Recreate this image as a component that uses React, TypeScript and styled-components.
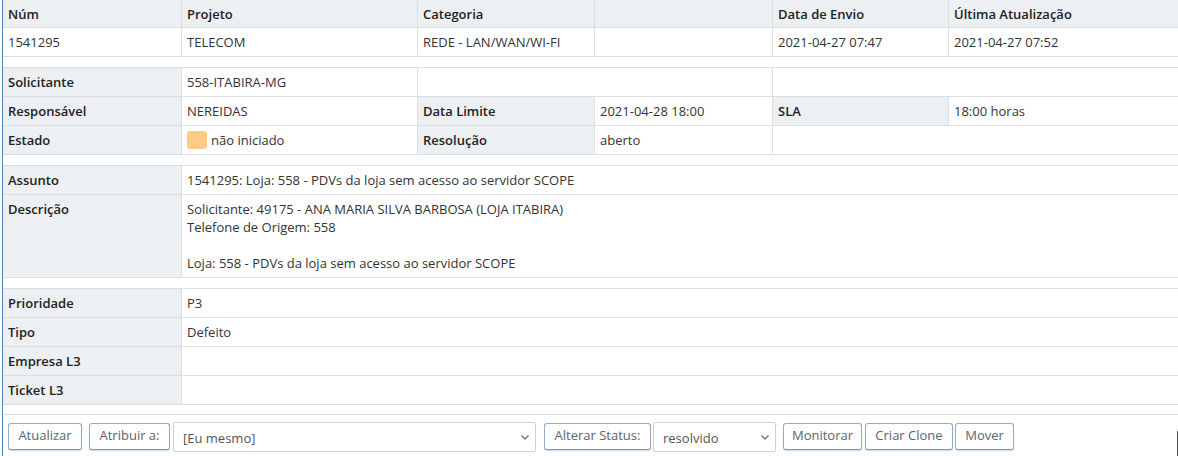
import React from "react";
import styled, { createGlobalStyle } from "styled-components";

const Global = createGlobalStyle`
  html, body { margin: 0; padding: 0; background: #fff; }
  body { font-family: "Open Sans", "Liberation Sans", sans-serif; font-size: 13px; color: #333; }
  * { box-sizing: border-box; }
`;

const Page = styled.div`
  margin-left: 2px;
  width: 1176px;
  height: 456px;
  border-left: 1px solid #4a85c6;
  overflow: hidden;
`;

const Grid = styled.div<{ $cols: string; $gap?: number; $top?: boolean }>`
  display: grid;
  grid-template-columns: ${(p) => p.$cols};
  margin-top: ${(p) => p.$gap ?? 0}px;
  border-top: ${(p) => (p.$top ? "1px solid #dcdfe2" : "none")};
`;

const Cell = styled.div<{ $label?: boolean; $span?: number; $last?: boolean; $h?: number; $top?: boolean }>`
  grid-column: span ${(p) => p.$span ?? 1};
  height: ${(p) => p.$h ?? 29}px;
  padding: ${(p) => (p.$top ? "5px 5px 0" : "0 5px")};
  display: flex;
  align-items: ${(p) => (p.$top ? "flex-start" : "center")};
  line-height: 18px;
  border-bottom: 1px solid #dcdfe2;
  border-right: ${(p) => (p.$last ? "none" : "1px solid #dcdfe2")};
  background: ${(p) => (p.$label ? "#ecf0f3" : "#fff")};
  font-weight: ${(p) => (p.$label ? 600 : 400)};
  color: ${(p) => (p.$label ? "#222" : "#333")};
  white-space: nowrap;
`;

const Lines = styled.div`
  display: flex;
  flex-direction: column;
  white-space: pre;
`;

const StatusDot = styled.span`
  display: inline-block;
  width: 20px;
  height: 18px;
  border-radius: 3px;
  background: #ffca85;
  margin-right: 4px;
`;

const Footer = styled.div`
  margin-top: 9px;
  border-top: 1px solid #dcdfe2;
  padding: 7px 0 0 5px;
  display: flex;
  align-items: flex-start;
  height: 60px;
`;

const Button = styled.button<{ $ml?: number; $w: number }>`
  margin-left: ${(p) => p.$ml ?? 0}px;
  width: ${(p) => p.$w}px;
  height: 27px;
  padding: 0 0 3px;
  margin-top: 1px;
  font-family: "Open Sans", "Liberation Sans", sans-serif;
  font-size: 13px;
  color: #5a6470;
  background: #fff;
  border: 1px solid #93abc6;
  border-bottom-color: #7f98b5;
  border-radius: 3px;
  box-shadow: 0 1px 1px rgba(120, 150, 190, 0.35);
  white-space: nowrap;
`;

const SelectWrap = styled.div<{ $ml?: number; $w: number }>`
  position: relative;
  margin-left: ${(p) => p.$ml ?? 0}px;
  width: ${(p) => p.$w}px;
  height: 30px;
`;

const Select = styled.select`
  appearance: none;
  -webkit-appearance: none;
  width: 100%;
  height: 100%;
  padding: 2px 24px 0 9px;
  font-family: "Open Sans", "Liberation Sans", sans-serif;
  font-size: 13px;
  color: #555;
  background: #fff;
  border: 1px solid #cfd3d7;
  border-radius: 2px;
  outline: none;
`;

const Chevron = styled.svg`
  position: absolute;
  right: 6px;
  top: 12px;
  width: 10px;
  height: 7px;
  pointer-events: none;
`;

const EdgeMark = styled.div`
  margin-left: auto;
  margin-top: 9px;
  width: 1px;
  height: 30px;
  background: #555;
`;

const Arrow = () => (
  <Chevron viewBox="0 0 10 7">
    <path d="M1.5 1.5 L5 5 L8.5 1.5" fill="none" stroke="#777" strokeWidth="1.5" />
  </Chevron>
);

const SIX = "179px 236px 177px 178px 176px 1fr";
const TWO = "179px 1fr";

export default function App() {
  return (
    <>
      <Global />
      <Page>
        <Grid $cols={SIX}>
          <Cell $label $h={28}>Núm</Cell>
          <Cell $label $h={28}>Projeto</Cell>
          <Cell $label $h={28}>Categoria</Cell>
          <Cell $label $h={28}></Cell>
          <Cell $label $h={28}>Data de Envio</Cell>
          <Cell $label $h={28} $last>Última Atualização</Cell>
          <Cell>1541295</Cell>
          <Cell>TELECOM</Cell>
          <Cell>REDE - LAN/WAN/WI-FI</Cell>
          <Cell></Cell>
          <Cell>2021-04-27 07:47</Cell>
          <Cell $last>2021-04-27 07:52</Cell>
        </Grid>

        <Grid $cols={SIX} $gap={10} $top>
          <Cell $label>Solicitante</Cell>
          <Cell>558-ITABIRA-MG</Cell>
          <Cell $span={2}></Cell>
          <Cell $span={2} $last></Cell>
          <Cell $label>Responsável</Cell>
          <Cell>NEREIDAS</Cell>
          <Cell $label>Data Limite</Cell>
          <Cell>2021-04-28 18:00</Cell>
          <Cell $label>SLA</Cell>
          <Cell $last>18:00 horas</Cell>
          <Cell $label>Estado</Cell>
          <Cell><StatusDot />não iniciado</Cell>
          <Cell $label>Resolução</Cell>
          <Cell>aberto</Cell>
          <Cell $span={2} $last></Cell>
        </Grid>

        <Grid $cols={TWO} $gap={10} $top>
          <Cell $label>Assunto</Cell>
          <Cell $last>1541295: Loja: 558 - PDVs da loja sem acesso ao servidor SCOPE</Cell>
          <Cell $label $top $h={83}>Descrição</Cell>
          <Cell $top $h={83} $last>
            <Lines>
              <span>Solicitante: 49175 - ANA MARIA SILVA BARBOSA (LOJA ITABIRA)</span>
              <span>Telefone de Origem: 558</span>
              <span> </span>
              <span>Loja: 558 - PDVs da loja sem acesso ao servidor SCOPE</span>
            </Lines>
          </Cell>
        </Grid>

        <Grid $cols={TWO} $gap={10} $top>
          <Cell $label>Prioridade</Cell>
          <Cell $last>P3</Cell>
          <Cell $label>Tipo</Cell>
          <Cell $last>Defeito</Cell>
          <Cell $label>Empresa L3</Cell>
          <Cell $last></Cell>
          <Cell $label>Ticket L3</Cell>
          <Cell $last></Cell>
        </Grid>

        <Footer>
          <Button $w={74}>Atualizar</Button>
          <Button $ml={7} $w={81}>Atribuir a:</Button>
          <SelectWrap $ml={3} $w={363}>
            <Select defaultValue="me">
              <option value="me">[Eu mesmo]</option>
            </Select>
            <Arrow />
          </SelectWrap>
          <Button $ml={8} $w={107}>Alterar Status:</Button>
          <SelectWrap $ml={2} $w={123}>
            <Select defaultValue="resolvido">
              <option value="resolvido">resolvido</option>
            </Select>
            <Arrow />
          </SelectWrap>
          <Button $ml={7} $w={79}>Monitorar</Button>
          <Button $ml={3} $w={88}>Criar Clone</Button>
          <Button $ml={2} $w={59}>Mover</Button>
          <EdgeMark />
        </Footer>
      </Page>
    </>
  );
}
